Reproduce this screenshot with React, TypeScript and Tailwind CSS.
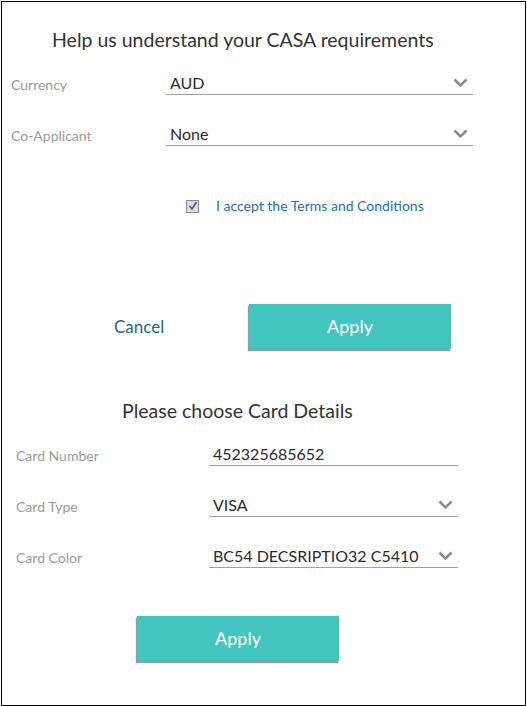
import React from 'react';

const Chevron = () => (
  <svg width="15" height="10" viewBox="0 0 15 10" className="shrink-0">
    <polyline points="1.5,1.5 7.5,7.5 13.5,1.5" fill="none" stroke="#8c8c8c" strokeWidth="2.6" />
  </svg>
);

interface FieldProps {
  label: string;
  value: string;
  select?: boolean;
  labelW: string;
  fieldW: string;
}

const Field: React.FC<FieldProps> = ({ label, value, select, labelW, fieldW }) => (
  <div className="flex items-end">
    <div className={`${labelW} text-[14px] text-[#9b9b9b] leading-[18px] pb-[1px]`}>{label}</div>
    <div className={`${fieldW} flex items-center justify-between border-b border-[#a0a0a0] pl-[4px] pr-[5px] h-[24px]`}>
      <span className="text-[16px] text-[#2b2b2b] leading-[20px]">{value}</span>
      {select && <Chevron />}
    </div>
  </div>
);

const ApplyButton: React.FC = () => (
  <button className="w-[202px] h-[45px] bg-[#43c5bf] text-white text-[18px] shadow-[-1px_2px_1px_rgba(0,0,0,0.4)]">
    Apply
  </button>
);

export default function App() {
  return (
    <div className="ml-px mt-px w-[525px] h-[705px] border border-black bg-white font-['Lato','Liberation_Sans',sans-serif]">
      {/* CASA section */}
      <h1 className="pl-[50px] pt-[26px] text-[19.5px] leading-[24px] text-[#333]">
        Help us understand your CASA requirements
      </h1>
      <div className="pl-[9px] mt-[19px] flex flex-col gap-[27px]">
        <Field label="Currency" value="AUD" select labelW="w-[155px]" fieldW="w-[307px]" />
        <Field label="Co-Applicant" value="None" select labelW="w-[155px]" fieldW="w-[307px]" />
      </div>

      <label className="flex items-center mt-[51px] pl-[184px] gap-[17px]">
        <span className="w-[13px] h-[13px] border border-[#8a8a8a] bg-[#dcdcdc] flex items-center justify-center">
          <svg width="10" height="10" viewBox="0 0 10 10">
            <polyline points="1.5,5 4,8 8.5,1" fill="none" stroke="#3b5fa8" strokeWidth="1.6" />
          </svg>
        </span>
        <span className="text-[14px] text-[#1f6fc0] leading-[18px]">I accept the Terms and Conditions</span>
      </label>

      <div className="flex items-center mt-[89px]">
        <button className="ml-[112px] w-[135px] text-left text-[17px] text-[#1a6b75]">Cancel</button>
        <ApplyButton />
      </div>

      {/* Card section */}
      <h2 className="pl-[120px] mt-[50px] text-[19.5px] leading-[24px] text-[#333]">Please choose Card Details</h2>
      <div className="pl-[14px] mt-[19px] flex flex-col gap-[27px]">
        <Field label="Card Number" value="452325685652" labelW="w-[193px]" fieldW="w-[249px]" />
        <Field label="Card Type" value="VISA" select labelW="w-[193px]" fieldW="w-[249px]" />
        <Field label="Card Color" value="BC54 DECSRIPTIO32 C5410" select labelW="w-[193px]" fieldW="w-[249px]" />
      </div>

      <div className="pl-[135px] mt-[48px]">
        <ApplyButton />
      </div>
    </div>
  );
}
